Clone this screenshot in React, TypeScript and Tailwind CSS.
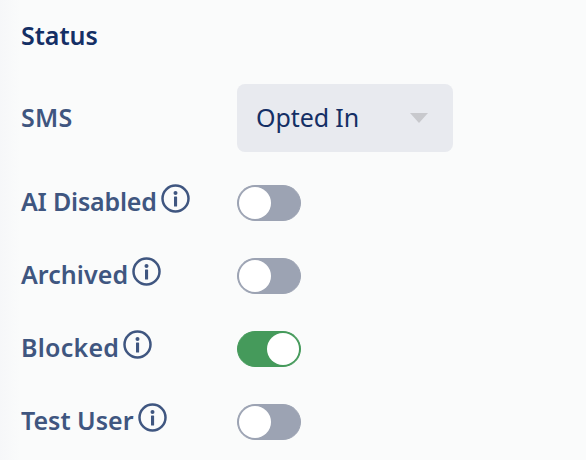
const font = "font-['Noto_Sans',sans-serif]";

function Info() {
  return (
    <svg width="29" height="29" viewBox="0 0 29 29" fill="none" className="shrink-0">
      <circle cx="14.5" cy="14.5" r="13" stroke="#3f5680" strokeWidth="2.5" />
      <circle cx="14.5" cy="9" r="2" fill="#3f5680" />
      <rect x="13" y="12.5" width="3.1" height="10" rx="0.6" fill="#3f5680" />
    </svg>
  );
}

function Toggle({ on = false }: { on?: boolean }) {
  return (
    <div
      className={`flex h-9 w-16 items-center rounded-full border p-px ${
        on ? "justify-end border-[#459a5b] bg-[#459a5b]" : "justify-start border-[#9ca3b3] bg-[#9ca3b3]"
      }`}
    >
      <div className="h-[32px] w-[32px] rounded-full bg-white" />
    </div>
  );
}

function Row({ label, on, spacing }: { label: string; on?: boolean; spacing: string }) {
  return (
    <div className="flex h-9 items-center">
      <div className="flex w-[216px] items-center">
        <span className={`-mt-1 text-[25px] leading-9 font-semibold text-[#3f5680] ${spacing}`}>{label}</span>
        <span className="mb-[9px] ml-1">
          <Info />
        </span>
      </div>
      <Toggle on={on} />
    </div>
  );
}

export default function App() {
  return (
    <div className={`flex h-[460px] w-[586px] flex-col bg-[linear-gradient(90deg,#f6f7f9_0px,#fafbfb_20px)] pt-[17px] pl-[21px] ${font}`}>
      <div className="h-9 text-[25px] leading-9 font-semibold tracking-[-0.05px] text-[#142f65]">Status</div>
      <div className="mt-[31px] flex h-[68px] items-center">
        <span className="w-[216px] text-[25px] font-semibold tracking-[0.2px] text-[#3f5680]">SMS</span>
        <div className="flex h-[68px] w-[216px] items-center justify-between rounded-lg bg-[#e8eaef] pr-[25px] pl-[19px]">
          <span className="text-[25px] tracking-[-0.1px] text-[#142f65]">Opted In</span>
          <svg width="18" height="10" viewBox="0 0 18 10">
            <path d="M0 0H18L9 10Z" fill="#c8c9cd" />
          </svg>
        </div>
      </div>
      <div className="mt-[33px] flex flex-col gap-[37px]">
        <Row label="AI Disabled" spacing="tracking-[-0.2px]" />
        <Row label="Archived" spacing="tracking-[0.05px]" />
        <Row label="Blocked" on spacing="tracking-[0.25px]" />
        <Row label="Test User" spacing="tracking-[0px]" />
      </div>
    </div>
  );
}
